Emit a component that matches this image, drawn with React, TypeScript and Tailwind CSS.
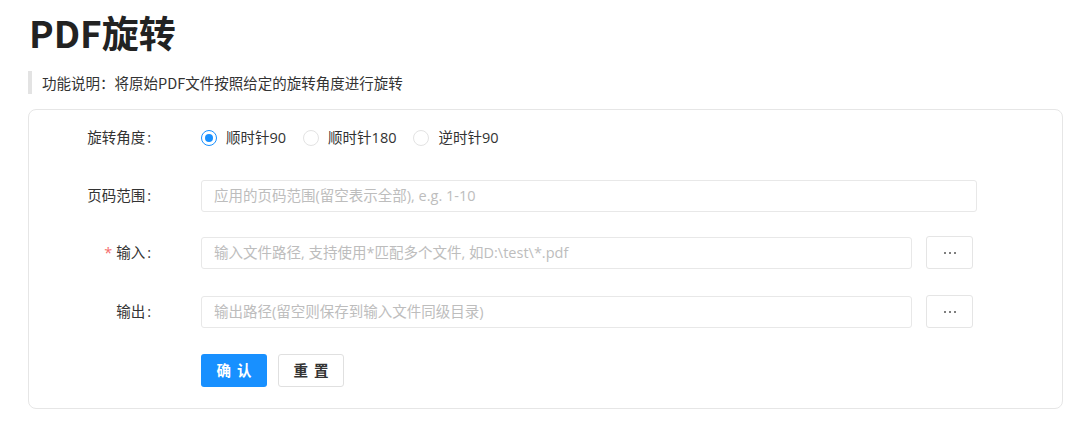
import React from "react";

const font = { fontFamily: '"Open Sans", "Noto Sans CJK SC", sans-serif' };
const titleFont = { fontFamily: '"Noto Sans CJK SC", "Noto Sans", sans-serif' };

function Radio({ checked, label }: { checked?: boolean; label: string }) {
  return (
    <label className="flex items-center mr-[17px]">
      <span
        className={
          "w-[16px] h-[16px] rounded-full border flex items-center justify-center " +
          (checked ? "border-[#1890ff]" : "border-[#e3e3e3]")
        }
      >
        {checked && <span className="w-[8px] h-[8px] rounded-full bg-[#1890ff]" />}
      </span>
      <span className="ml-[9px] text-[14.5px] text-[#333]">{label}</span>
    </label>
  );
}

function Label({ text, required }: { text: string; required?: boolean }) {
  return (
    <div className="w-[122px] shrink-0 text-right text-[14.5px] text-[#333] pr-0">
      {required && <span className="text-[#f56c6c] mr-[4px]">*</span>}
      {text}
      <span className="ml-[2px]">:</span>
    </div>
  );
}

function Input({ placeholder, width }: { placeholder: string; width: string }) {
  return (
    <div
      className={
        "h-[32px] border border-[#e8e8e8] rounded-[3px] flex items-center px-[12px] text-[14.5px] text-[#bdbdbd] " +
        width
      }
    >
      {placeholder}
    </div>
  );
}

function DotsButton() {
  return (
    <div className="ml-[14px] w-[47px] h-[33px] border border-[#e5e5e5] rounded-[3px] flex items-center justify-center gap-[3px]">
      <span className="w-[2px] h-[2px] rounded-full bg-[#555]" />
      <span className="w-[2px] h-[2px] rounded-full bg-[#555]" />
      <span className="w-[2px] h-[2px] rounded-full bg-[#555]" />
    </div>
  );
}

export default function App() {
  return (
    <div className="w-[1080px] h-[424px] bg-white" style={font}>
      <div className="pl-[28px] pr-[17px] pt-[6px]">
        <h1 className="pl-[1px] text-[37px] font-bold text-[#222] leading-[52px]" style={titleFont}>
          PDF旋转
        </h1>
        <div
          className="mt-[13px] border-l-[4px] border-[#e3e3e3] pl-[10px] h-[23px] flex items-center text-[14.5px] text-[#333]"
          style={titleFont}
        >
          功能说明：将原始PDF文件按照给定的旋转角度进行旋转
        </div>
        <div className="mt-[15px] border border-[#e6e6e6] rounded-[8px] h-[300px] pt-[12px]">
          <div className="flex items-center h-[32px]">
            <Label text="旋转角度" />
            <div className="ml-[50px] flex items-center">
              <Radio checked label="顺时针90" />
              <Radio label="顺时针180" />
              <Radio label="逆时针90" />
            </div>
          </div>
          <div className="flex items-center h-[32px] mt-[26px]">
            <Label text="页码范围" />
            <div className="ml-[50px]">
              <Input width="w-[776px]" placeholder="应用的页码范围(留空表示全部), e.g. 1-10" />
            </div>
          </div>
          <div className="flex items-center h-[33px] mt-[24px]">
            <Label text="输入" required />
            <div className="ml-[50px] flex items-center">
              <Input width="w-[711px]" placeholder="输入文件路径, 支持使用*匹配多个文件, 如D:\test\*.pdf" />
              <DotsButton />
            </div>
          </div>
          <div className="flex items-center h-[33px] mt-[26px]">
            <Label text="输出" />
            <div className="ml-[50px] flex items-center">
              <Input width="w-[711px]" placeholder="输出路径(留空则保存到输入文件同级目录)" />
              <DotsButton />
            </div>
          </div>
          <div className="flex items-center mt-[26px] pl-[172px]">
            <div className="w-[66px] h-[33px] rounded-[3px] bg-[#1890ff] text-white text-[14.5px] font-bold flex items-center justify-center tracking-[6px] pl-[6px]">
              确认
            </div>
            <div className="ml-[11px] w-[66px] h-[33px] rounded-[3px] border border-[#e0e0e0] text-[#333] text-[14.5px] font-bold flex items-center justify-center tracking-[6px] pl-[6px]">
              重置
            </div>
          </div>
        </div>
      </div>
    </div>
  );
}
